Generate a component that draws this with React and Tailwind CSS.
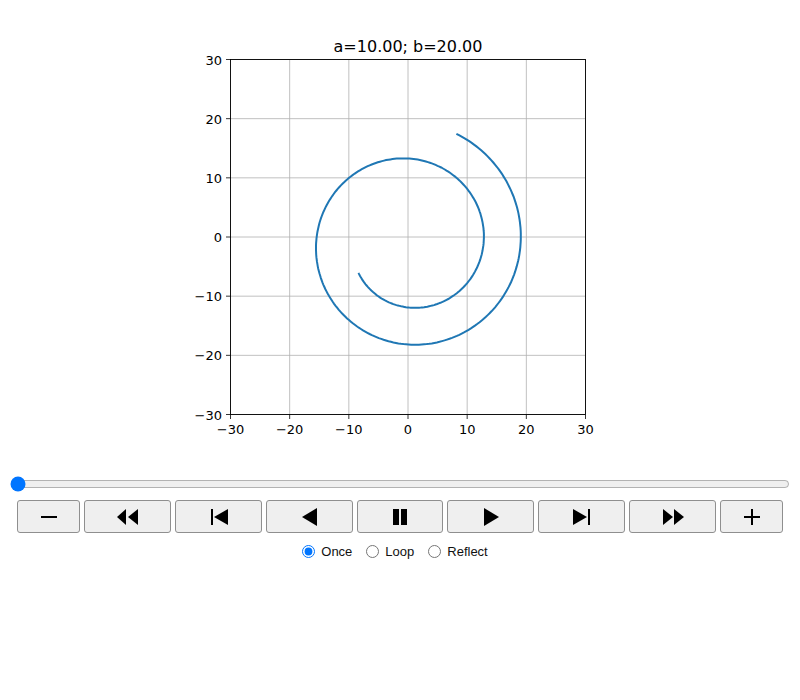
import React from "react";

const X0 = 408, Y0 = 237, S = 355 / 60;
const px = (x) => X0 + x * S;
const py = (y) => Y0 - y * S;

function spiral() {
  const pts = [];
  const t0 = (211 * Math.PI) / 180, t1 = (786.5 * Math.PI) / 180;
  for (let i = 0; i <= 400; i++) {
    const t = t0 + ((t1 - t0) * i) / 400;
    const r = 10 + ((t - t0) / (t1 - t0)) * 10;
    pts.push(`${px(r * Math.cos(t) + 0.2).toFixed(1)},${py(r * Math.sin(t) - 0.9).toFixed(1)}`);
  }
  return "M" + pts.join(" L");
}

const ticks = [-30, -20, -10, 0, 10, 20, 30];
const lab = (v) => (v < 0 ? "\u2212" + -v : String(v));

function Chart() {
  return (
    <svg width="800" height="450" className="block" style={{ fontFamily: "'DejaVu Sans', sans-serif" }}>
      <text x="408" y="52" fontSize="16" textAnchor="middle" fill="#000">a=10.00; b=20.00</text>
      {ticks.map((t) => (
        <g key={t}>
          <line x1={px(t)} x2={px(t)} y1="59.5" y2="414.5" stroke="#b0b0b0" strokeWidth="0.8" />
          <line x1="230.5" x2="585.5" y1={py(t)} y2={py(t)} stroke="#b0b0b0" strokeWidth="0.8" />
          <line x1={px(t)} x2={px(t)} y1="414.5" y2="419" stroke="#000" strokeWidth="0.8" />
          <line x1="226" x2="230.5" y1={py(t)} y2={py(t)} stroke="#000" strokeWidth="0.8" />
          <text x={px(t)} y="434" fontSize="13" textAnchor="middle">{lab(t)}</text>
          <text x="222" y={py(t) + 5} fontSize="13" textAnchor="end">{lab(t)}</text>
        </g>
      ))}
      <rect x="230.5" y="59.5" width="355" height="355" fill="none" stroke="#000" strokeWidth="0.9" />
      <path d={spiral()} fill="none" stroke="#1f77b4" strokeWidth="2" />
    </svg>
  );
}

const icons = [
  <rect x="-8" y="-1" width="16" height="2" />,
  <path d="M-11 0 L-2 -8 V8 Z M0 0 L10 -8 V8 Z" />,
  <path d="M-8 -8 H-6 V8 H-8 Z M-5 0 L9 -8 V8 Z" />,
  <path d="M-8 0 L7 -9 V9 Z" />,
  <path d="M-7 -8 H-1 V8 H-7 Z M1 -8 H7 V8 H1 Z" />,
  <path d="M-7 -9 L8 0 L-7 9 Z" />,
  <path d="M-9 -8 L5 0 L-9 8 Z M6 -8 H8 V8 H6 Z" />,
  <path d="M-10 -8 L0 0 L-10 8 Z M1 -8 L11 0 L1 8 Z" />,
  <path d="M-1 -8 H1 V8 H-1 Z M-8 -1 H8 V1 H-8 Z" />,
];
const widths = ["w-[63px]", "w-[87px]", "w-[87px]", "w-[87px]", "w-[86px]", "w-[87px]", "w-[87px]", "w-[87px]", "w-[63px]"];

export default function App() {
  return (
    <div className="w-[800px] h-[700px] bg-white" style={{ fontFamily: "'Liberation Sans', Arial, sans-serif" }}>
      <Chart />
      <div className="px-[10px] pt-[27px]">
        <input type="range" defaultValue="0" className="w-[780px] h-[14px] block" />
      </div>
      <div className="flex gap-[4px] pl-[17px] pt-[9px]">
        {icons.map((ic, i) => (
          <button key={i} className={`${widths[i]} h-[33px] bg-[#efefef] border border-[#8f8f8f] rounded-[3px] flex items-center justify-center`}>
            <svg width="24" height="20" viewBox="-12 -10 24 20">{ic}</svg>
          </button>
        ))}
      </div>
      <div className="flex justify-center items-center gap-[14px] pt-[9px] text-[13px] text-[#111] pr-[10px]">
        <label className="flex items-center gap-[6px]"><input type="radio" name="r" defaultChecked />Once</label>
        <label className="flex items-center gap-[6px]"><input type="radio" name="r" />Loop</label>
        <label className="flex items-center gap-[6px]"><input type="radio" name="r" />Reflect</label>
      </div>
    </div>
  );
}
